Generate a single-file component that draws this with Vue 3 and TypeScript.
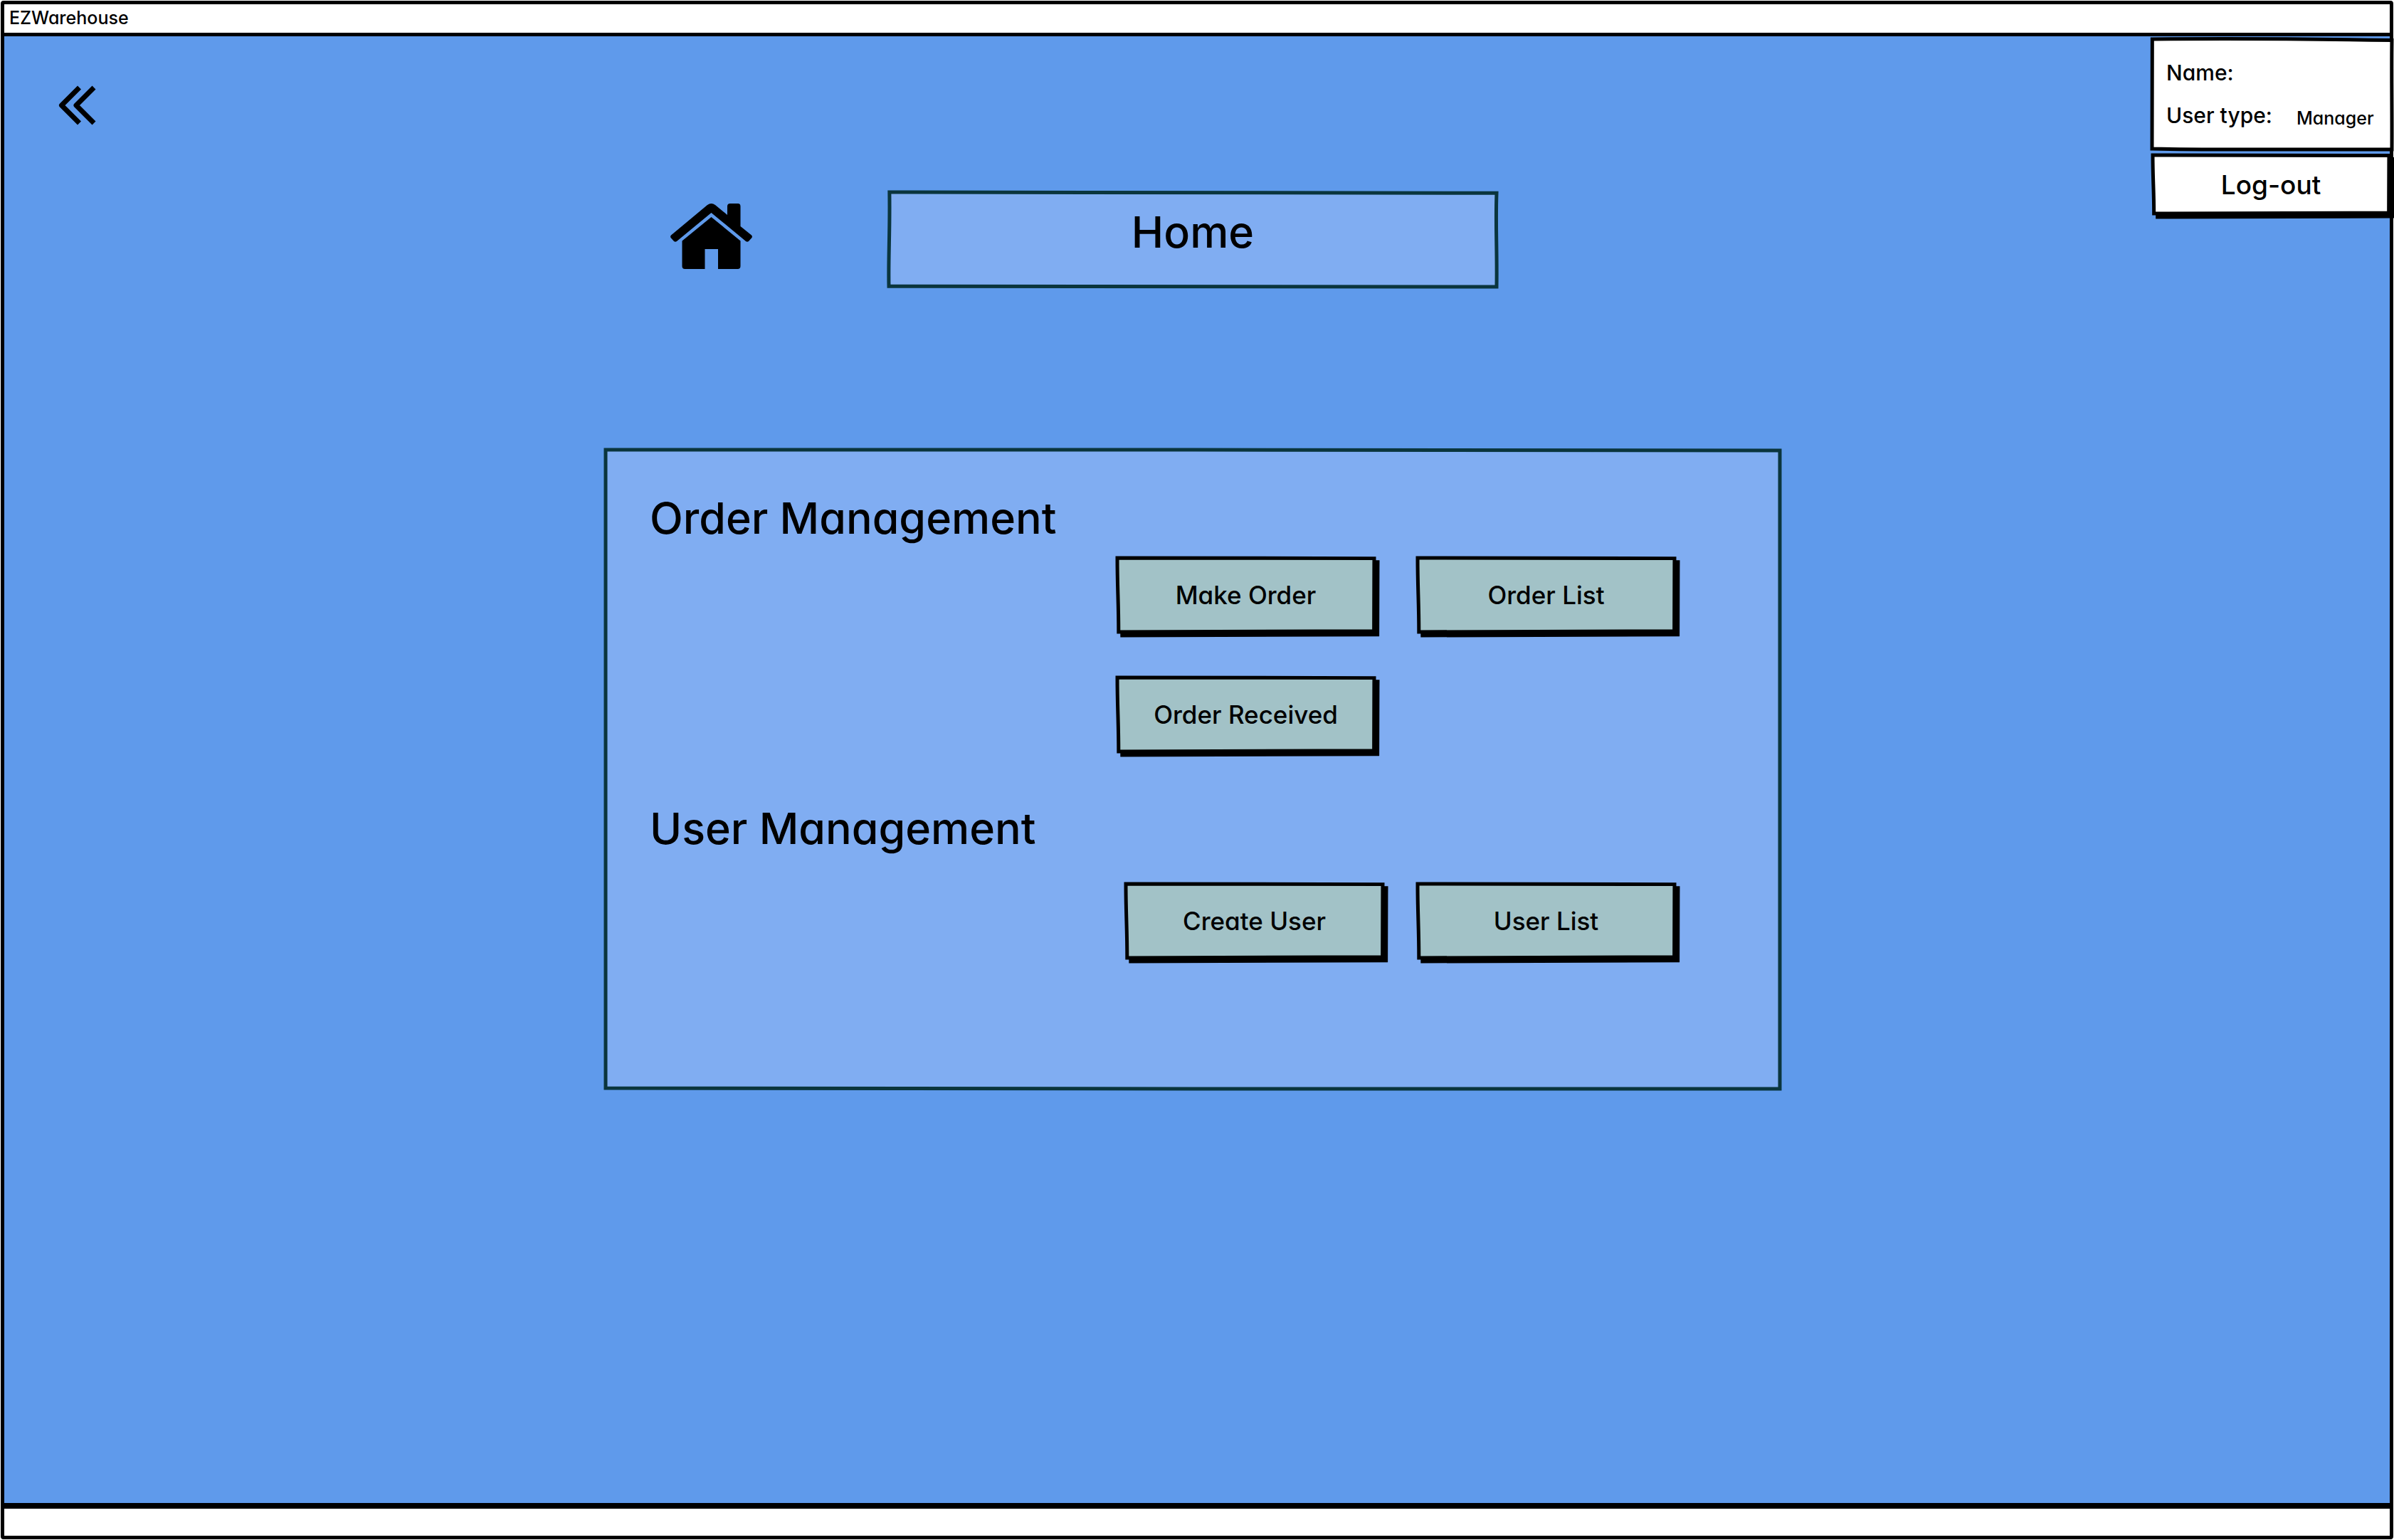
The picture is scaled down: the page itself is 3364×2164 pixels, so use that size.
<script setup lang="ts">
import { h } from 'vue'

interface Action {
  label: string
}

interface Section {
  id: string
  title: string
  actions: Action[]
}

const sections: Section[] = [
  {
    id: 'order',
    title: 'Order Management',
    actions: [{ label: 'Make Order' }, { label: 'Order List' }, { label: 'Order Received' }],
  },
  {
    id: 'user',
    title: 'User Management',
    actions: [{ label: 'Create User' }, { label: 'User List' }],
  },
]

// Hand-drawn outline that stretches to its box while keeping an even stroke.
const outlines: Record<string, string> = {
  wide: 'M0.1 0 C30 -0.6 60 -0.4 100 1 C99.8 35 100.1 60 100 100 C70 99.6 40 100.8 0 99.4 C-0.1 70 0.2 40 0.1 0 Z',
  large: 'M0 0 C30 0.1 70 -0.1 100 0.1 C99.9 40 100.1 70 100 100 C70 99.9 30 100.1 0 99.9 C-0.1 60 0.1 30 0 0 Z',
  button: 'M0 0 C20 -0.8 60 0.6 100 0.6 C99.9 35 100 70 99.9 98.8 C75 99.8 40 98.6 0.5 100 C0.5 60 0 40 0 0 Z',
}

const SketchFrame = (props: { shape: string }) =>
  h(
    'svg',
    { class: 'frame', viewBox: '0 0 100 100', preserveAspectRatio: 'none', 'aria-hidden': 'true' },
    [h('path', { d: outlines[props.shape], 'vector-effect': 'non-scaling-stroke' })],
  )
SketchFrame.props = ['shape']
</script>

<template>
  <div class="page">
    <div class="window">
      <header class="titlebar">EZWarehouse</header>

      <main class="content">
        <nav class="side-left">
          <button class="back" type="button" aria-label="Back">
            <svg viewBox="0 0 54 56" width="54" height="56" aria-hidden="true">
              <path d="M29.500 3 L4.500 28 L29.500 53 M50 3 L25 28 L50 53" />
            </svg>
          </button>
        </nav>

        <div class="center">
          <div class="heading">
            <svg class="house" viewBox="0 0 115 92" width="115" height="92" aria-hidden="true">
              <path
                d="M52 2 Q57.500 -2 63 2 L80 16 V4 Q80 0 84 0 H95 Q98.500 0 98.500 4 V32 L114 44.500 Q115.500 46 114.500 48 L110 53 Q108 54.500 106 53 L57.500 13 L9 53 Q7 54.500 5 53 L0.500 48 Q-0.500 46 1 44.500 Z"
              />
              <path
                d="M57.500 19 L98.500 52.500 V88 Q98.500 92 94.500 92 H67 V64 H48.500 V92 H20.500 Q16.500 92 16.500 88 V52.500 Z"
              />
            </svg>
            <div class="title-box">
              <SketchFrame shape="wide" />
              <h1>Home</h1>
            </div>
          </div>

          <div class="panel">
            <SketchFrame shape="large" />
            <section v-for="section in sections" :key="section.id" :class="['group', section.id]">
              <h2>{{ section.title }}</h2>
              <div class="actions">
                <button v-for="action in section.actions" :key="action.label" class="action" type="button">
                  <SketchFrame shape="button" />
                  <span>{{ action.label }}</span>
                </button>
              </div>
            </section>
          </div>
        </div>

        <aside class="side-right">
          <dl class="account">
            <SketchFrame shape="wide" />
            <div class="field">
              <dt>Name:</dt>
              <dd></dd>
            </div>
            <div class="field">
              <dt>User type:</dt>
              <dd>Manager</dd>
            </div>
          </dl>
          <button class="action logout" type="button">
            <SketchFrame shape="button" />
            <span>Log-out</span>
          </button>
        </aside>
      </main>

      <footer class="statusbar"></footer>
    </div>
  </div>
</template>

<style>
body {
  background: #fff;
}
</style>

<style scoped>
.page {
  box-sizing: border-box;
  min-height: 100vh;
  padding: 1px;
  display: flex;
  color: #000;
  font-family: Inter, "Liberation Sans", sans-serif;
  font-weight: 450;
  font-feature-settings: "cv11";
}

.window {
  flex: 1;
  display: flex;
  flex-direction: column;
  border: 5px solid #000;
  border-radius: 4px;
  min-width: 0;
}

.titlebar {
  height: 40px;
  padding: 0 7px;
  border-bottom: 5px solid #000;
  font-size: 25px;
  line-height: 38px;
}

.statusbar {
  height: 38px;
  border-top: 8px solid #000;
}

.content {
  flex: 1;
  display: grid;
  grid-template-columns: 843fr 1654fr 855fr;
  background: #5f9aeb;
}

.side-left {
  padding: 69px 76px;
}

.back {
  display: block;
  padding: 0;
  border: 0;
  background: none;
}

.back svg {
  display: block;
  fill: none;
  stroke: #000;
  stroke-width: 7;
  stroke-linejoin: round;
}

.center {
  padding-top: 217px;
  min-width: 0;
}

.heading {
  display: grid;
  grid-template-columns: 1fr 858px 1fr;
  align-items: start;
}

.house {
  margin: 18px 0 0 93px;
}

.title-box,
.panel,
.account,
.action {
  position: relative;
}

.title-box {
  height: 137px;
}

.frame {
  position: absolute;
  top: 2px;
  left: 2px;
  width: calc(100% - 4px);
  height: calc(100% - 4px);
  overflow: visible;
  fill: #80adf2;
  stroke: #0a353d;
  stroke-width: 5;
}

h1,
h2 {
  position: relative;
  margin: 0;
  font-size: 61px;
  line-height: 80px;
  font-weight: 450;
}

h1 {
  padding-top: 18px;
  text-align: center;
}

.panel {
  box-sizing: border-box;
  margin-top: 225px;
  padding: 58px 64px 184px;
}

.group + .group {
  margin-top: 66px;
}

.actions {
  display: flex;
  flex-wrap: wrap;
  gap: 60px 57px;
  margin: 14px 0 0 655px;
}

.user .actions {
  column-gap: 45px;
  margin: 36px 0 0 667px;
}

.action {
  width: 365px;
  height: 108px;
  padding: 0;
  border: 0;
  background: none;
  color: #000;
  font: inherit;
  font-size: 35px;
  font-feature-settings: inherit;
}

.action span {
  position: relative;
}

.action .frame {
  fill: #a2c2c7;
  stroke: #000;
  filter: drop-shadow(5px 5px 0 #000);
}

.side-right {
  display: flex;
  flex-direction: column;
  align-items: flex-end;
  margin-right: -5px;
  padding-top: 2px;
}

.account {
  box-sizing: border-box;
  width: 341px;
  height: 159px;
  margin: 0;
  padding: 19px 22px;
}

.account .frame {
  fill: #fff;
  stroke: #000;
}

.field {
  position: relative;
  display: flex;
  gap: 34px;
  line-height: 60px;
  font-size: 30px;
}

dd {
  margin: 0;
  padding-top: 4px;
  font-size: 25px;
}

.logout {
  width: 336px;
  height: 86px;
  margin: 4px 4px 0 0;
  font-size: 37px;
}

.logout .frame {
  fill: #fff;
}
</style>
